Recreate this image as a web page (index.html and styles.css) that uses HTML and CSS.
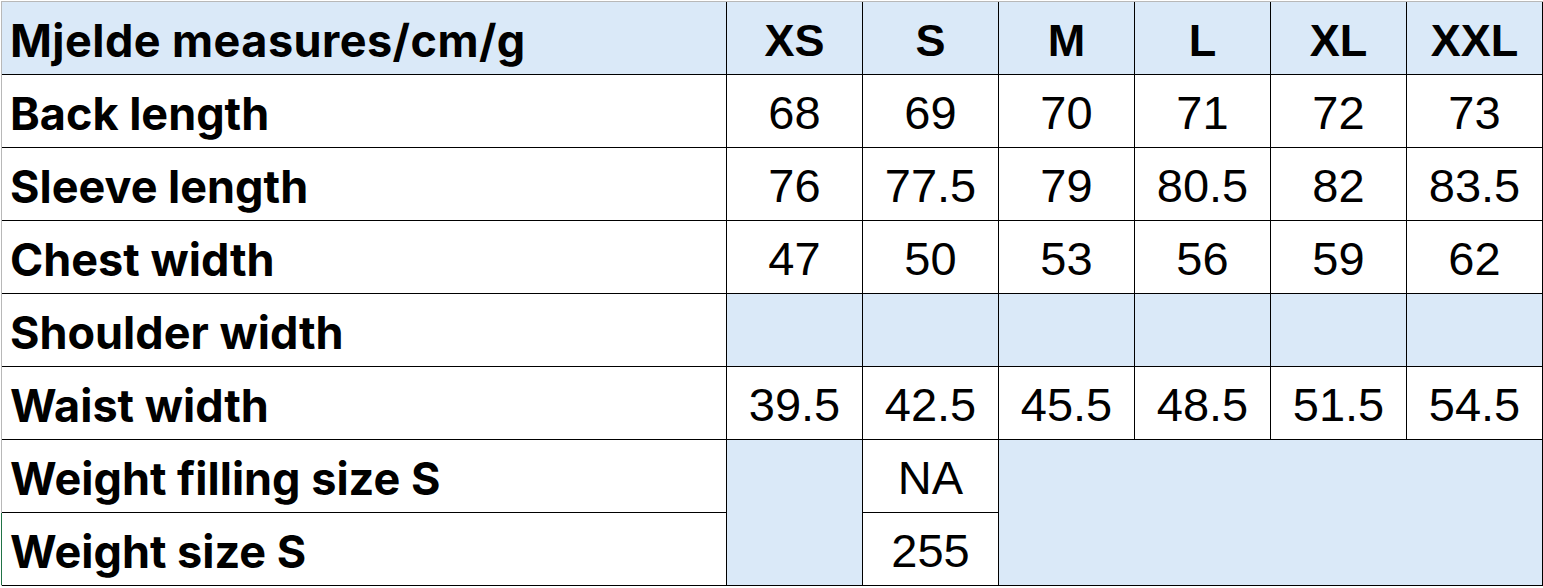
FILE: index.html
```html
<!DOCTYPE html>
<html>
<head>
<meta charset="utf-8">
<link rel="stylesheet" href="styles.css">
</head>
<body>
<div class="sheet">
  <div class="grid">
    <div class="cell label head title">Mjelde measures/cm/g</div>
    <div class="cell size head">XS</div>
    <div class="cell size head">S</div>
    <div class="cell size head">M</div>
    <div class="cell size head">L</div>
    <div class="cell size head">XL</div>
    <div class="cell size head">XXL</div>

    <div class="cell label">Back length</div>
    <div class="cell num">68</div>
    <div class="cell num">69</div>
    <div class="cell num">70</div>
    <div class="cell num">71</div>
    <div class="cell num">72</div>
    <div class="cell num">73</div>

    <div class="cell label">Sleeve length</div>
    <div class="cell num">76</div>
    <div class="cell num">77.5</div>
    <div class="cell num">79</div>
    <div class="cell num">80.5</div>
    <div class="cell num">82</div>
    <div class="cell num">83.5</div>

    <div class="cell label">Chest width</div>
    <div class="cell num">47</div>
    <div class="cell num">50</div>
    <div class="cell num">53</div>
    <div class="cell num">56</div>
    <div class="cell num">59</div>
    <div class="cell num">62</div>

    <div class="cell label">Shoulder width</div>
    <div class="cell blank"></div>
    <div class="cell blank"></div>
    <div class="cell blank"></div>
    <div class="cell blank"></div>
    <div class="cell blank"></div>
    <div class="cell blank"></div>

    <div class="cell label">Waist width</div>
    <div class="cell num">39.5</div>
    <div class="cell num">42.5</div>
    <div class="cell num">45.5</div>
    <div class="cell num">48.5</div>
    <div class="cell num">51.5</div>
    <div class="cell num">54.5</div>

    <div class="cell label">Weight filling size S</div>
    <div class="cell blank span-xs"></div>
    <div class="cell num">NA</div>
    <div class="cell blank span-rest"></div>

    <div class="cell label selected">Weight size S</div>
    <div class="cell num">255</div>
  </div>
</div>
</body>
</html>
```
FILE: styles.css
```css
html, body {
  margin: 0;
  padding: 0;
  background: #ffffff;
}

.sheet {
  margin-top: 1px;
  margin-left: 1px;
  width: 1542px;
  border-top: 1px solid #b8b8b8;
  border-left: 1px solid #b8b8b8;
}

.grid {
  display: grid;
  grid-template-columns: 724px repeat(6, 135px);
  grid-template-rows: 72px repeat(7, 72px);
  gap: 1px;
  background: #000000;
  padding: 0 1px 1px 0;
  width: 1541px;
  box-sizing: border-box;
}

.cell {
  background: #ffffff;
  display: flex;
  align-items: flex-end;
  padding-bottom: 11px;
  box-sizing: border-box;
  color: #000000;
}

.head {
  background: #dae9f8;
}

.label {
  font-family: Inter, "Open Sans", sans-serif;
  font-weight: 700;
  font-size: 45px;
  line-height: 1;
  padding-left: 8px;
  letter-spacing: 0;
}

.title {
  letter-spacing: 0.45px;
}

.selected {
  box-shadow: -1px 0 0 #217346;
}

.size {
  font-family: "Liberation Sans", Arial, sans-serif;
  font-weight: 700;
  font-size: 45px;
  line-height: 1;
  justify-content: center;
}

.num {
  font-family: "Liberation Sans", Arial, sans-serif;
  font-weight: 400;
  font-size: 47px;
  line-height: 1;
  justify-content: center;
}

.blank {
  background: #dae9f8;
}

.span-xs {
  grid-row: span 2;
}

.span-rest {
  grid-column: span 4;
  grid-row: span 2;
}
```
